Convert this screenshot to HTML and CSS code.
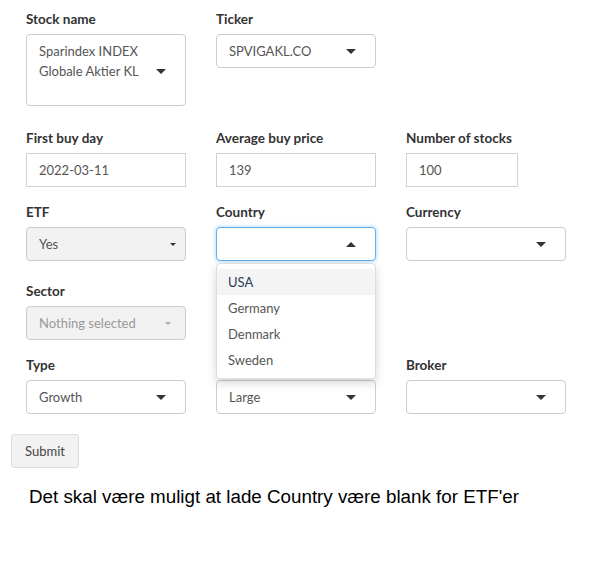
FILE: index.html
```html
<!DOCTYPE html>
<html>
<head>
<meta charset="utf-8">
<link rel="stylesheet" href="styles.css">
</head>
<body>
<div class="page">
  <div class="row r1">
    <div class="col">
      <label class="lbl">Stock name</label>
      <div class="sel tall">
        <span class="val">Sparindex INDEX<br>Globale Aktier KL</span>
        <span class="caret"></span>
      </div>
    </div>
    <div class="col">
      <label class="lbl">Ticker</label>
      <div class="sel"><span class="val">SPVIGAKL.CO</span><span class="caret"></span></div>
    </div>
    <div class="col"></div>
  </div>

  <div class="row r2">
    <div class="col">
      <label class="lbl">First buy day</label>
      <div class="inp">2022-03-11</div>
    </div>
    <div class="col">
      <label class="lbl">Average buy price</label>
      <div class="inp">139</div>
    </div>
    <div class="col">
      <label class="lbl">Number of stocks</label>
      <div class="inp short">100</div>
    </div>
  </div>

  <div class="row r3">
    <div class="col">
      <label class="lbl">ETF</label>
      <div class="sel grey etf"><span class="val">Yes</span><span class="caret small"></span></div>
    </div>
    <div class="col dd-host">
      <label class="lbl">Country</label>
      <div class="sel focus"><span class="val"></span><span class="caret up"></span></div>
      <ul class="menu">
        <li class="active">USA</li>
        <li>Germany</li>
        <li>Denmark</li>
        <li>Sweden</li>
      </ul>
    </div>
    <div class="col">
      <label class="lbl">Currency</label>
      <div class="sel"><span class="val"></span><span class="caret"></span></div>
    </div>
  </div>

  <div class="row r4">
    <div class="col">
      <label class="lbl">Sector</label>
      <div class="sel grey disabled"><span class="val">Nothing selected</span><span class="caret small"></span></div>
    </div>
  </div>

  <div class="row r5">
    <div class="col">
      <label class="lbl">Type</label>
      <div class="sel"><span class="val">Growth</span><span class="caret"></span></div>
    </div>
    <div class="col">
      <label class="lbl">&nbsp;</label>
      <div class="sel"><span class="val">Large</span><span class="caret"></span></div>
    </div>
    <div class="col">
      <label class="lbl">Broker</label>
      <div class="sel"><span class="val"></span><span class="caret"></span></div>
    </div>
  </div>

  <button class="btn">Submit</button>

  <p class="note">Det skal være muligt at lade Country være blank for ETF'er</p>
</div>
</body>
</html>
```
FILE: styles.css
```css
* { box-sizing: border-box; }
body {
  margin: 0;
  background: #fff;
  font-family: "Source Sans Pro", Lato, "Open Sans", sans-serif;
  font-size: 13px;
  color: #333;
}
.page {
  padding: 10px 0 0 11px;
}
.row {
  display: grid;
  grid-template-columns: 190px 190px 190px;
}
.col {
  padding: 0 15px;
}
.r1 { margin-bottom: 23px; }
.r2 { margin-bottom: 16px; }
.r3 { margin-bottom: 21px; }
.r4 { margin-bottom: 16px; }
.r5 { margin-bottom: 20px; }
.lbl {
  display: block;
  font-weight: bold;
  font-size: 13.5px;
  line-height: 19px;
  margin-bottom: 5px;
}
.sel, .inp {
  height: 34px;
  border: 1px solid #ccc;
  border-radius: 4px;
  display: flex;
  align-items: center;
  padding: 0 12px;
  color: #555;
  position: relative;
  background: #fff;
}
.inp {
  border-radius: 0;
  border-color: #ccd3dc;
}
.inp.short { width: 112px; }
.sel .val { flex: 1; white-space: nowrap; }
.sel.tall {
  height: 72px;
  align-items: flex-start;
  padding-top: 6px;
}
.sel.tall .val { line-height: 20px; white-space: normal; }
.sel.tall .caret { margin-top: 28px; }
.caret {
  width: 0;
  height: 0;
  border-left: 5px solid transparent;
  border-right: 5px solid transparent;
  border-top: 5px solid #333;
  margin-right: 7px;
}
.caret.up {
  border-top: 0;
  border-bottom: 5px solid #333;
}
.caret.small {
  border-left-width: 3px;
  border-right-width: 3px;
  border-top-width: 3px;
  margin-right: 2px;
}
.sel.etf .caret.small { margin-right: -3px; }
.sel.grey { background: #f2f2f2; }
.sel.disabled { color: #999; }
.sel.disabled .caret { border-top-color: #aaa; }
.sel.focus {
  border-color: #66afe9;
  box-shadow: 0 0 4px rgba(102, 175, 233, 0.6);
}
.dd-host { position: relative; }
.menu {
  position: absolute;
  left: 15px;
  top: 60px;
  width: 160px;
  margin: 0;
  padding: 5px 0;
  list-style: none;
  background: #fff;
  border: 1px solid #ddd;
  border-radius: 4px;
  box-shadow: 0 4px 10px rgba(0, 0, 0, 0.17);
  z-index: 10;
}
.menu li {
  height: 26px;
  line-height: 26px;
  padding: 0 11px;
  color: #555;
}
.menu li.active { background: #f4f4f4; color: #2a3c5a; }
.btn {
  display: block;
  height: 34px;
  width: 68px;
  border: 1px solid #ddd;
  border-radius: 3px;
  background: #f2f2f2;
  color: #444;
  font-family: inherit;
  font-size: 13px;
  padding: 0;
}
.note {
  margin: 18px 0 0 18px;
  font-family: "Liberation Sans", Arial, sans-serif;
  font-size: 18.8px;
  color: #000;
}
```
